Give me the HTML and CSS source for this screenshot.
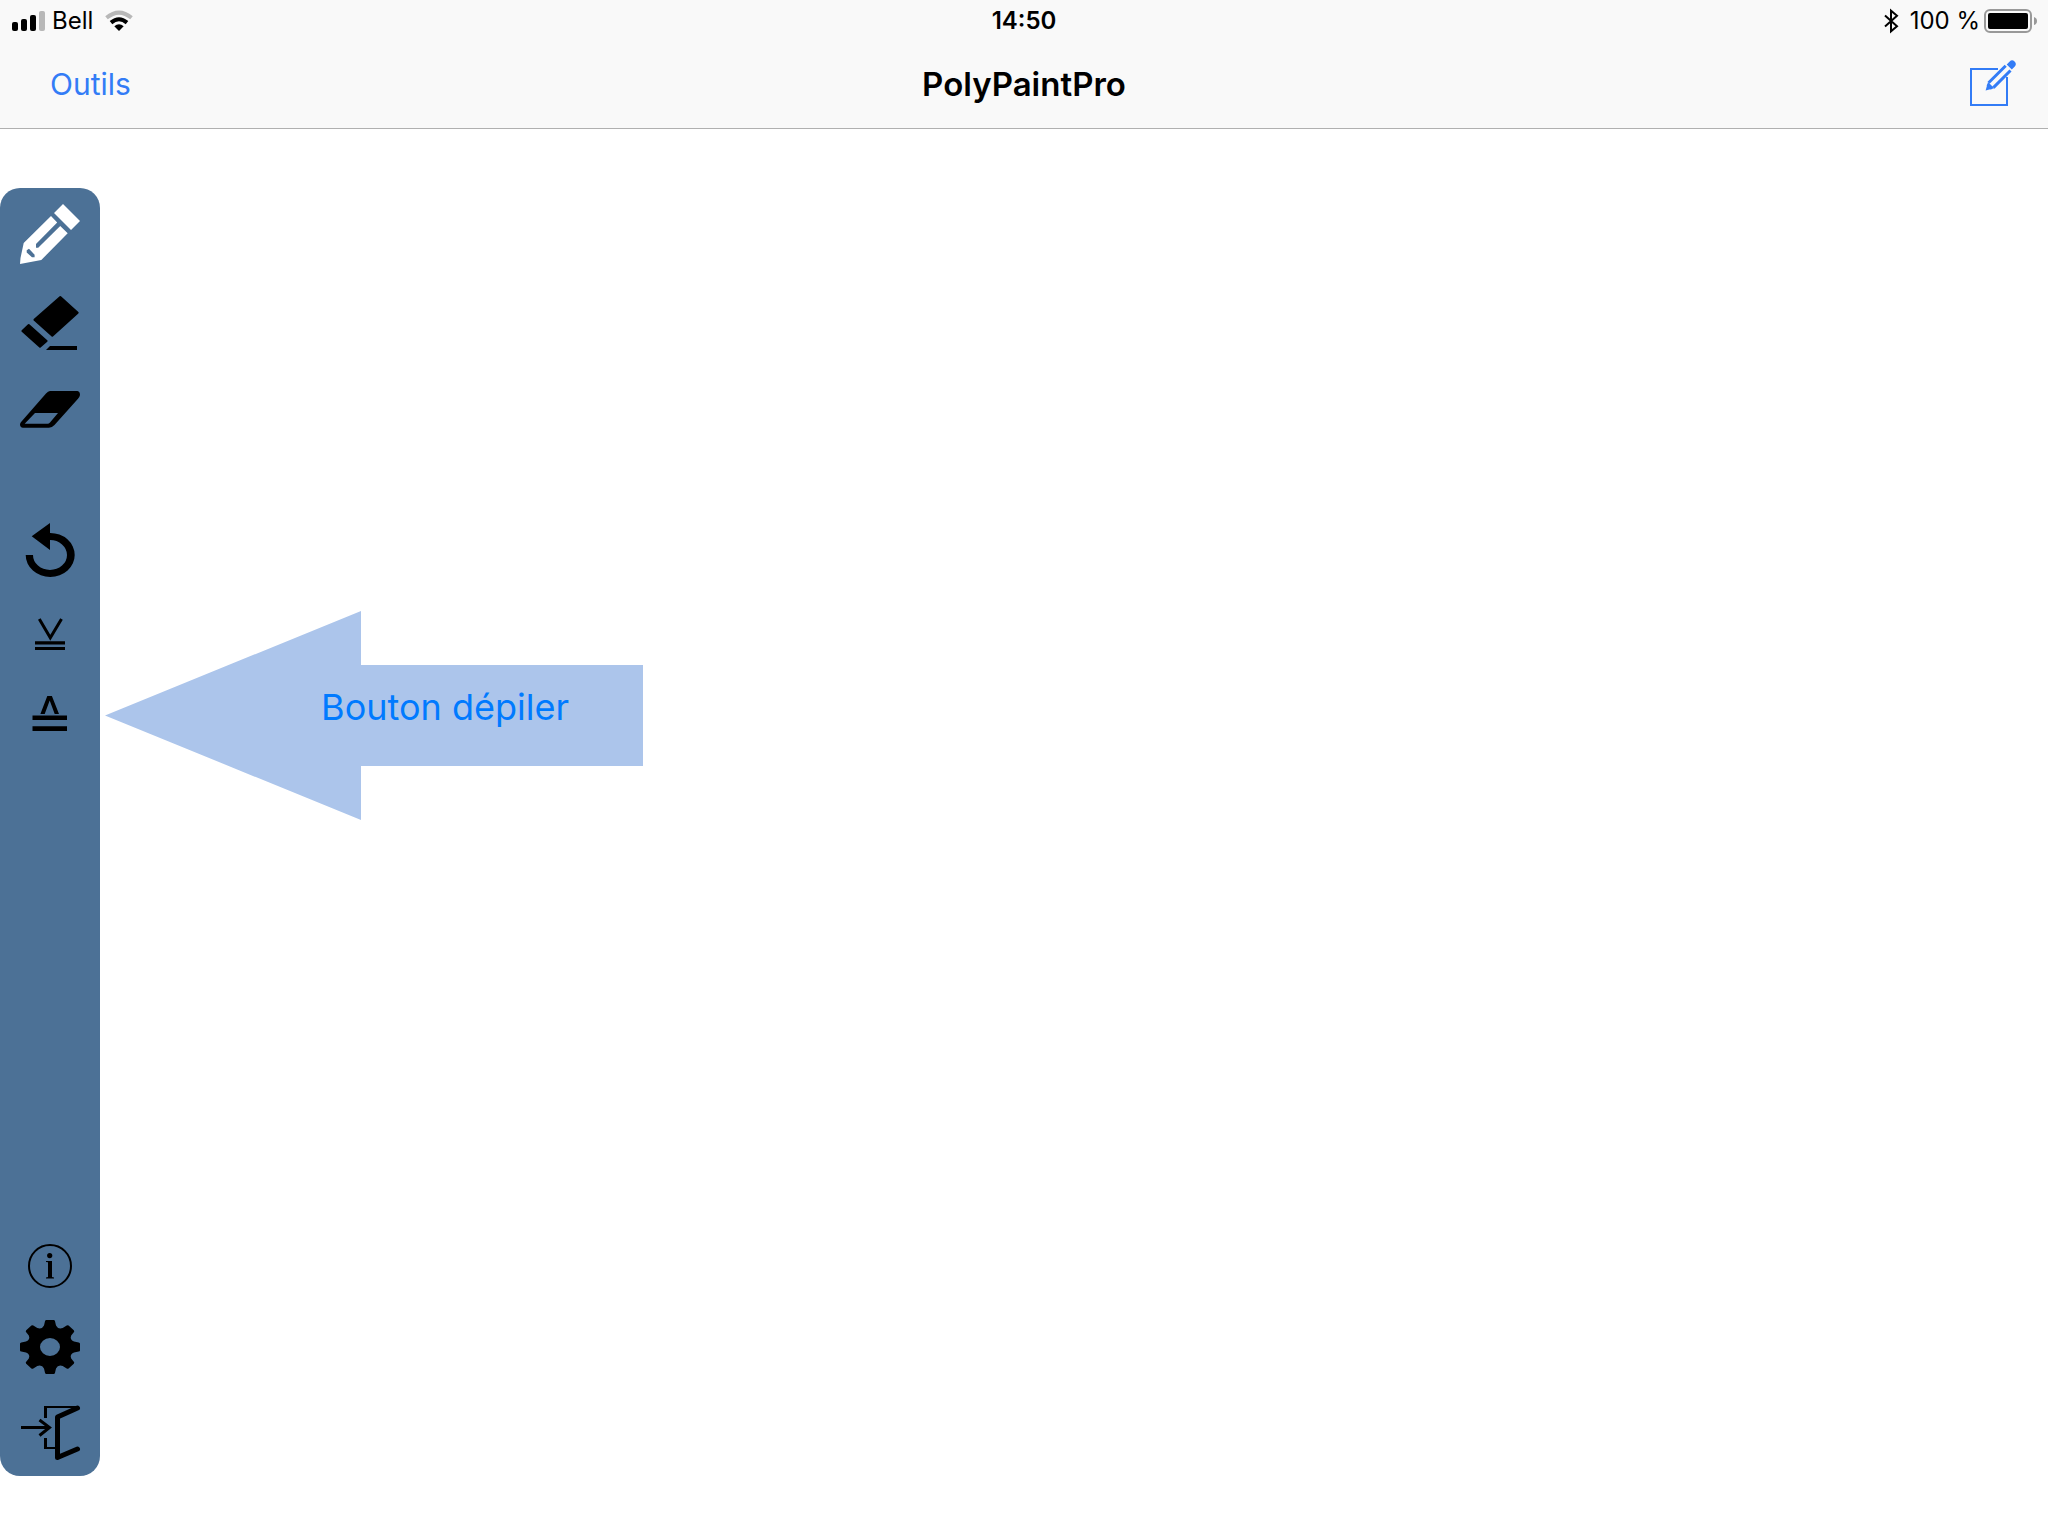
FILE: index.html
```html
<!DOCTYPE html>
<html lang="fr">
<head>
<meta charset="utf-8">
<meta name="viewport" content="width=device-width, initial-scale=1">
<title>PolyPaintPro</title>
<link rel="stylesheet" href="styles.css">
</head>
<body>
<header class="header">
  <div class="status">
    <div class="status-left">
      <svg class="signal" viewBox="0 0 34 20" aria-hidden="true">
        <rect x="0" y="11" width="6" height="9" rx="2"/>
        <rect x="9" y="8" width="6" height="12" rx="2"/>
        <rect x="18" y="4" width="6" height="16" rx="2"/>
        <rect class="faint" x="27" y="0" width="6" height="20" rx="2"/>
      </svg>
      <span>Bell</span>
      <svg class="wifi" viewBox="0 0 28 20" aria-hidden="true">
        <path class="faint-line" d="M1.5 6.8Q14 -3.6 26.5 6.8"/>
        <path class="line" d="M6 11.6Q14 5 22 11.6"/>
        <path d="M9.3 15.2Q14 11.2 18.7 15.2L14 20Z"/>
      </svg>
    </div>
    <time class="clock">14:50</time>
    <div class="status-right">
      <svg class="bluetooth" viewBox="0 0 14 24" aria-hidden="true">
        <path d="M1 6.5L13 17.2L7 22.3V1.7L13 6.8L1 17.5"/>
      </svg>
      <span>100 %</span>
      <svg class="battery" viewBox="0 0 52 24" aria-hidden="true">
        <rect class="shell" x="1" y="1" width="46" height="22" rx="5"/>
        <rect x="4" y="4" width="40" height="16" rx="2"/>
        <path class="knob" d="M50 8Q53 9 53 12T50 16Z"/>
      </svg>
    </div>
  </div>
  <nav class="nav">
    <button class="nav-link" type="button">Outils</button>
    <h1 class="title">PolyPaintPro</h1>
    <button class="compose" type="button" aria-label="Nouveau dessin">
      <svg viewBox="0 0 48 48" aria-hidden="true">
        <path class="edge" d="M30 9H3V45H39V17"/>
        <path class="pencil" d="M20.6 22.8L37.7 5.7M25.4 27.6L42.5 10.5M19.6 24.2L24 28.6"/>
        <path d="M20 22L26.2 28.2L17.6 30.6ZM38.7 4.4L41.7 1.4Q44 -1 46.6 1.4Q49 4 46.8 6.4L43.8 9.4Z"/>
      </svg>
    </button>
  </nav>
</header>
<main class="workspace">
  <div class="toolbar" role="toolbar" aria-label="Outils">
    <div class="tools tools-draw">
      <button class="tool tool-active" type="button" aria-label="Crayon">
        <svg viewBox="0 0 60 60"><path fill-rule="evenodd" d="M43 0L60 17L51 26L34 9ZM31 12L37.2 18.6L16 40V43.7H18.2L40.2 22L47.7 29.3L21.3 56L0 60L.5 54L3.7 39ZM9 44.7L6.7 46.3V48.5L12 53.3H14.6V50.8Z"/></svg>
      </button>
      <button class="tool" type="button" aria-label="Efface segment">
        <svg viewBox="0 0 60 60"><path class="soft" d="M40.3 5L57.7 20.7L32.3 43.8L14.4 27.8ZM8.7 33L2.4 39L20 54.8L26.6 49Z"/><path d="M30 54H57V58H26Z"/></svg>
      </button>
      <button class="tool" type="button" aria-label="Efface trait">
        <svg viewBox="0 0 60 60"><path fill-rule="evenodd" d="M30 11H57.5Q60 11.5 60 15Q59.6 17 58 18.8L34.5 45Q32 47.7 29 47.7H3Q0 47.5 0 44.5Q0 43 1.5 41.5L26 13.5Q28 11.2 30 11ZM15 33L4.7 43.8H27.5Q29 43.8 30 42.5L38 33Z"/></svg>
      </button>
    </div>
    <div class="tools tools-history">
      <button class="tool" type="button" aria-label="Réinitialiser">
        <svg viewBox="0 0 60 60"><path d="M5.7 35A24.5 22 0 1 0 30 13V3L11.7 16.3L30 30V20A17 15 0 1 1 13 35Z"/></svg>
      </button>
      <button class="tool" type="button" aria-label="Empiler">
        <svg viewBox="0 0 60 60"><path class="thin" d="M19.3 17L30.3 35.7L41.5 17"/><path d="M15 39.3H45V42.6H15ZM15 45H45V48H15Z"/></svg>
      </button>
      <button class="tool" type="button" aria-label="Dépiler">
        <svg viewBox="0 0 60 60"><path d="M20.4 30L27.3 12H31.9L39 30H34.7L29.7 16.5L24.7 30ZM12.5 31.4H47V36H12.5ZM12.5 42.2H47V47H12.5Z"/></svg>
      </button>
    </div>
    <div class="tools tools-app">
      <button class="tool" type="button" aria-label="Informations">
        <svg viewBox="0 0 60 60"><circle class="ring" cx="30" cy="30" r="21"/><circle cx="29.7" cy="19.6" r="2.6"/><path d="M26 25H32V41L34 41.4V42.5H26V41.4L28 41V26.3L26 26Z"/></svg>
      </button>
      <button class="tool" type="button" aria-label="Réglages">
        <svg viewBox="0 0 60 60"><g transform="translate(30 29) scale(1 .9)"><path fill-rule="evenodd" d="M-6 -24L-5 -28.7Q-4.8 -30 -3.5 -30H3.5Q4.8 -30 5 -28.7L6 -24Q8 -19.4 12.7 -21.2L16.7 -24Q17.6 -24.6 18.6 -23.8L23.8 -18.6Q24.6 -17.6 24 -16.7L21.2 -12.7Q19.4 -8 24 -6L28.7 -5Q30 -4.8 30 -3.5V3.5Q30 4.8 28.7 5L24 6Q19.4 8 21.2 12.7L24 16.7Q24.6 17.6 23.8 18.6L18.6 23.8Q17.6 24.6 16.7 24L12.7 21.2Q8 19.4 6 24L5 28.7Q4.8 30 3.5 30H-3.5Q-4.8 30 -5 28.7L-6 24Q-8 19.4 -12.7 21.2L-16.7 24Q-17.6 24.6 -18.6 23.8L-23.8 18.6Q-24.6 17.6 -24 16.7L-21.2 12.7Q-19.4 8 -24 6L-28.7 5Q-30 4.8 -30 3.5V-3.5Q-30 -4.8 -28.7 -5L-24 -6Q-19.4 -8 -21.2 -12.7L-24 -16.7Q-24.6 -17.6 -23.8 -18.6L-18.6 -23.8Q-17.6 -24.6 -16.7 -24L-12.7 -21.2Q-8 -19.4 -6 -24ZM10 0A10 10 0 1 0 -10 0A10 10 0 1 0 10 0Z"/></g></svg>
      </button>
      <button class="tool" type="button" aria-label="Quitter">
        <svg viewBox="0 0 60 60"><path class="thin" d="M25.5 18V6M25.5 38V49M1 27.5H30M19.5 20L29.5 27.5L19.5 35.5"/><path class="hair" d="M24 7H58M24 48H37"/><path class="door" d="M57.5 8L37.5 17V57.5L57.5 49"/></svg>
      </button>
    </div>
  </div>
  <button class="callout" type="button"><span>Bouton dépiler</span></button>
</main>
</body>
</html>
```
FILE: styles.css
```css
* {
  box-sizing: border-box;
}

body {
  margin: 0;
  min-height: 100vh;
  display: flex;
  flex-direction: column;
  background: #fff;
  color: #000;
  font-family: Inter, "Liberation Sans", sans-serif;
}

button {
  margin: 0;
  padding: 0;
  border: 0;
  background: none;
  color: inherit;
  font: inherit;
  cursor: pointer;
}

svg {
  display: block;
  overflow: visible;
}

/* Status bar and navigation bar */

.header {
  background: #f9f9f9;
  border-bottom: 1px solid #b0b0b0;
}

.status,
.nav {
  display: grid;
  grid-template-columns: 1fr auto 1fr;
  align-items: center;
}

.status {
  height: 40px;
  padding: 0 12px;
  font-size: 24px;
  line-height: 42px;
}

.status-left,
.status-right {
  display: flex;
  align-items: center;
}

.status-right {
  justify-content: flex-end;
}

.clock {
  font-weight: 600;
}

.signal {
  width: 34px;
  height: 20px;
  margin-right: 6px;
}

.wifi {
  width: 28px;
  height: 20px;
  margin-left: 12px;
}

.faint {
  fill: #b8b8b8;
}

.faint-line,
.line {
  fill: none;
  stroke: #000;
  stroke-width: 4;
}

.faint-line {
  stroke: #b8b8b8;
}

.bluetooth {
  width: 14px;
  height: 24px;
  margin-right: 12px;
  fill: none;
  stroke: #000;
  stroke-width: 2;
}

.battery {
  width: 52px;
  height: 24px;
  margin-left: 4px;
}

.shell {
  fill: none;
  stroke: #999;
  stroke-width: 2;
}

.knob {
  fill: #999;
}

.nav {
  height: 88px;
  padding: 0 32px;
}

.nav-link {
  justify-self: start;
  padding-left: 18px;
  color: #337cf6;
  font-size: 30px;
}

.title {
  margin: 0;
  font-size: 33px;
  font-weight: 600;
}

.compose {
  justify-self: end;
}

.compose svg {
  width: 48px;
  height: 48px;
  fill: #337cf6;
}

.edge,
.pencil {
  fill: none;
  stroke: #337cf6;
  stroke-width: 2;
}

.pencil {
  stroke-width: 3;
}

/* Drawing area */

.workspace {
  flex: 1;
  display: flex;
  align-items: stretch;
  padding: 59px 0 60px;
}

.toolbar {
  width: 100px;
  display: flex;
  flex-direction: column;
  gap: 80px;
  padding: 16px 20px;
  border-radius: 20px;
  background: #4c7196;
}

.tools {
  display: flex;
  flex-direction: column;
  gap: 22px;
}

.tools-draw {
  gap: 28px;
}

.tools-app {
  margin-top: auto;
}

.tool,
.tool svg {
  display: block;
  width: 60px;
  height: 60px;
}

.tool-active {
  fill: #fff;
}

.soft {
  stroke: #000;
  stroke-width: 2;
  stroke-linejoin: round;
}

.thin,
.hair,
.ring,
.door {
  fill: none;
  stroke: #000;
}

.thin {
  stroke-width: 3;
}

.hair,
.ring {
  stroke-width: 2;
}

.door {
  stroke-width: 5;
  stroke-linecap: round;
  stroke-linejoin: round;
}

.callout {
  align-self: flex-start;
  width: 538px;
  height: 209px;
  margin: 423px 0 0 5px;
  padding: 0 74px 18px 0;
  background: #acc5eb;
  clip-path: polygon(0 50%, 256px 0, 256px 54px, 100% 54px, 100% 155px, 256px 155px, 256px 100%);
  color: #007aff;
  font-size: 36px;
  text-align: right;
}
```
